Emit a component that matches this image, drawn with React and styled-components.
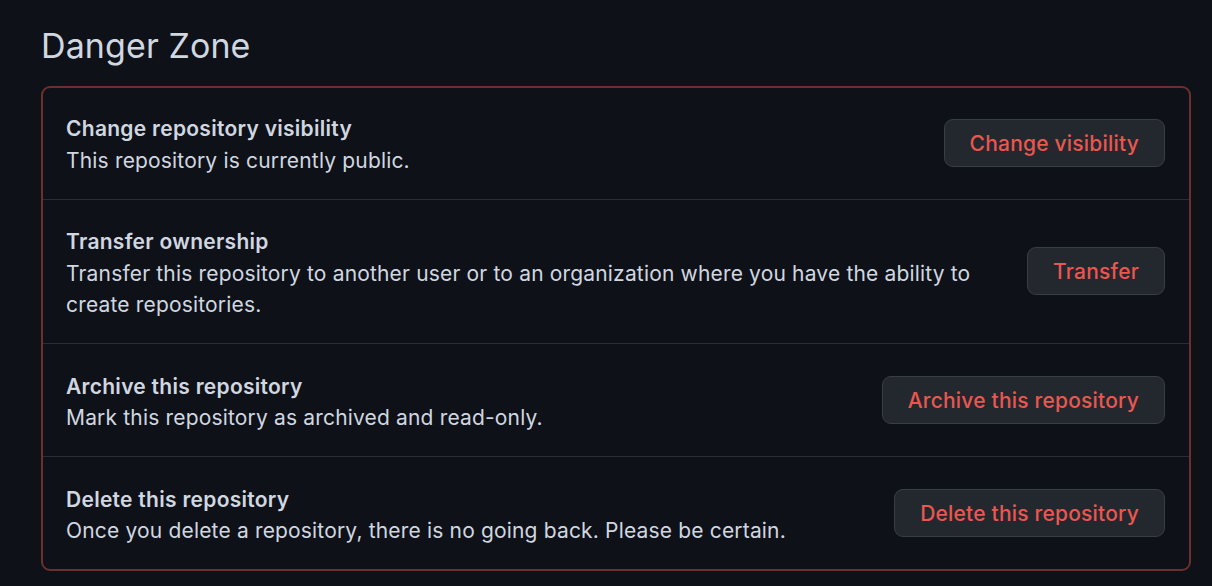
import React from "react";
import styled, { createGlobalStyle } from "styled-components";

const GlobalStyle = createGlobalStyle`
  html, body {
    margin: 0;
    padding: 0;
    background: #0e1117;
  }
  body {
    font-family: Inter, "Noto Sans", "Liberation Sans", sans-serif;
    color: #d1d7e0;
    -webkit-font-smoothing: antialiased;
  }
`;

const Page = styled.div`
  padding: 22px 21px 0 41px;
  min-height: 586px;
  box-sizing: border-box;
`;

const Heading = styled.h2`
  margin: 0 0 17px;
  font-size: 34px;
  line-height: 47px;
  font-weight: 400;
  letter-spacing: 0.1px;
  color: #d1d7e0;
`;

const Box = styled.div`
  border: 2px solid #6b302d;
  border-radius: 9px;
`;

const Info = styled.div`
  flex: 1;
  padding-top: 4px;
  font-size: 21px;
  line-height: 31.5px;
`;

const Row = styled.div`
  display: flex;
  align-items: center;
  justify-content: space-between;
  gap: 40px;
  padding: 22.5px 24px 22.5px 23px;
  & + & {
    border-top: 1px solid #2a2e35;
  }
  &:first-child ${Info} {
    padding-top: 2.5px;
  }
`;

const Title = styled.div`
  font-weight: 600;
  letter-spacing: 0.28px;
  color: #d1d7e0;
`;

const Desc = styled.div`
  font-weight: 400;
  letter-spacing: 0.17px;
  color: #d1d7e0;
`;

const DangerButton = styled.button`
  flex: none;
  height: 48px;
  padding: 0 25px;
  border: 1px solid #393e45;
  border-radius: 9px;
  background: #23272e;
  color: #e9574f;
  font-family: inherit;
  font-size: 21px;
  font-weight: 500;
  letter-spacing: 0.2px;
  cursor: pointer;
`;

const rows = [
  {
    title: "Change repository visibility",
    desc: "This repository is currently public.",
    action: "Change visibility",
  },
  {
    title: "Transfer ownership",
    desc: "Transfer this repository to another user or to an organization where you have the ability to create repositories.",
    action: "Transfer",
  },
  {
    title: "Archive this repository",
    desc: "Mark this repository as archived and read-only.",
    action: "Archive this repository",
  },
  {
    title: "Delete this repository",
    desc: "Once you delete a repository, there is no going back. Please be certain.",
    action: "Delete this repository",
  },
];

export default function App() {
  return (
    <>
      <GlobalStyle />
      <Page>
        <Heading>Danger Zone</Heading>
        <Box>
          {rows.map((r) => (
            <Row key={r.title}>
              <Info>
                <Title>{r.title}</Title>
                <Desc>{r.desc}</Desc>
              </Info>
              <DangerButton>{r.action}</DangerButton>
            </Row>
          ))}
        </Box>
      </Page>
    </>
  );
}
